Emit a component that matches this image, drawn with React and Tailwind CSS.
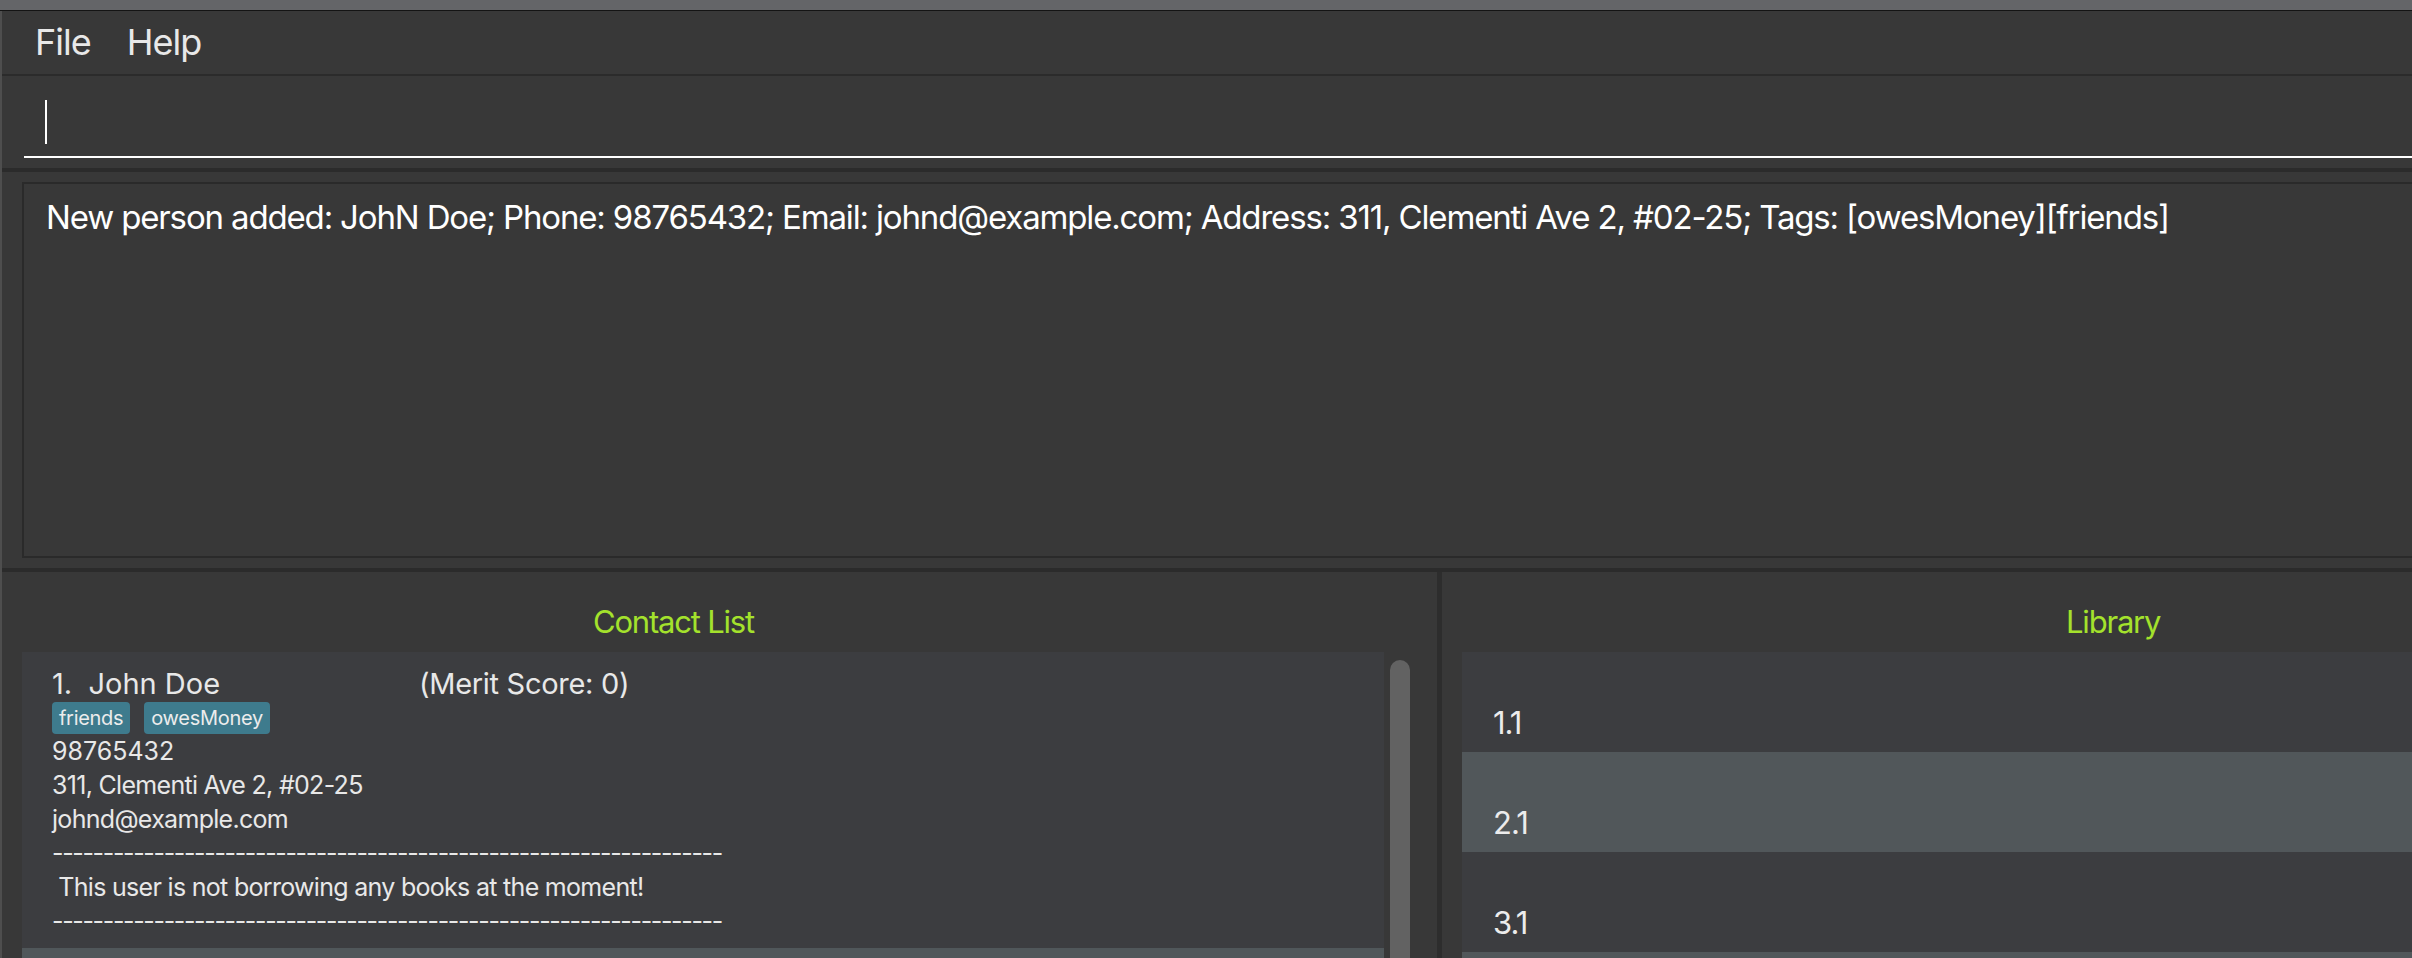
const dashes = '-'.repeat(66)

function Tag({ children }) {
  return (
    <span className="flex h-[32px] items-center rounded-[4px] bg-[#3e7b8d] px-[7px] text-[20px] leading-none tracking-[-0.3px] text-[#ececec]">
      {children}
    </span>
  )
}

function PersonCard() {
  return (
    <div className="bg-[#3c3d40] pl-[30px] pt-[14px] pb-[10px] text-[#e8e8e8]">
      <div className="flex h-[36px] text-[29px] leading-[36px]">
        <span className="w-[367px]">1.&nbsp;&nbsp;John Doe</span>
        <span className="tracking-[-0.3px]">(Merit Score: 0)</span>
      </div>
      <div className="flex gap-[14px]">
        <Tag>friends</Tag>
        <Tag>owesMoney</Tag>
      </div>
      <div className="text-[25px] leading-[34px] tracking-[-0.7px]">
        <p className="tracking-normal">98765432</p>
        <p>311, Clementi Ave 2, #02-25</p>
        <p>johnd@example.com</p>
        <p className="tracking-[-1.35px]">{dashes}</p>
        <p>&nbsp;This user is not borrowing any books at the moment!</p>
        <p className="tracking-[-1.35px]">{dashes}</p>
      </div>
    </div>
  )
}

function BookRow({ label, alt }) {
  return (
    <div className={`h-[100px] pl-[31px] pt-[51px] text-[31px] leading-[40px] tracking-[-1px] text-[#ececec] ${alt ? 'bg-[#51575a]' : 'bg-[#3c3d40]'}`}>
      {label}
    </div>
  )
}

export default function App() {
  return (
    <div className="flex h-[958px] w-[2412px] flex-col overflow-hidden bg-[#383838] font-['Inter',sans-serif]">
      {/* window title strip */}
      <div className="h-[10px] shrink-0 bg-[#646568]" />
      <div className="h-px shrink-0 bg-[#141414]" />

      <div className="flex min-h-0 flex-1">
        <div className="w-[2px] shrink-0 bg-[#4e4e4e]" />

        <div className="flex min-w-0 flex-1 flex-col">
          {/* menu bar */}
          <div className="flex h-[63px] shrink-0 text-[36px] leading-[63px] tracking-[-1px] text-[#e8e8e8]">
            <span className="ml-[33px]">File</span>
            <span className="ml-[36px]">Help</span>
          </div>
          <div className="h-[2px] shrink-0 bg-[#2b2b2b]" />

          {/* command box */}
          <div className="h-[92px] shrink-0 pl-[22px] pt-[24px]">
            <div className="h-[58px] border-b-2 border-white pl-[21px]">
              <div className="h-[44px] w-[2px] bg-white" />
            </div>
          </div>
          <div className="h-[4px] shrink-0 bg-[#2b2b2b]" />

          {/* result display */}
          <div className="h-[396px] shrink-0 py-[10px] pl-[20px]">
            <div className="h-full border-2 border-r-0 border-[#2a2a2a] pl-[22px] pt-[13px] text-[33px] leading-[40px] tracking-[-1.15px] whitespace-nowrap text-white">
              New person added: JohN Doe; Phone: 98765432; Email: johnd@example.com; Address: 311, Clementi Ave 2, #02-25; Tags: [owesMoney][friends]
            </div>
          </div>
          <div className="h-[4px] shrink-0 bg-[#2b2b2b]" />

          {/* lower panels */}
          <div className="flex min-h-0 flex-1">
            <div className="flex w-[1435px] shrink-0 flex-col">
              <div className="h-[80px] shrink-0 pl-[591px] pt-[31px] text-[31px] leading-[38px] tracking-[-1.2px] text-[#a4e22c]">
                Contact List
              </div>
              <div className="flex min-h-0 flex-1 pl-[20px] pr-[23px]">
                <div className="min-w-0 flex-1">
                  <PersonCard />
                  <div className="h-[40px] bg-[#50575a]" />
                </div>
                <div className="w-[30px] shrink-0 pl-[6px] pt-[8px]">
                  <div className="h-full w-[20px] rounded-t-[10px] bg-[#626262]" />
                </div>
              </div>
            </div>

            <div className="w-[5px] shrink-0 bg-[#2d2d2d]" />

            <div className="flex min-w-0 flex-1 flex-col">
              <div className="h-[80px] shrink-0 pl-[624px] pt-[31px] text-[31px] leading-[38px] tracking-[-1.2px] text-[#a4e22c]">
                Library
              </div>
              <div className="pl-[20px]">
                <BookRow label="1.1" />
                <BookRow label="2.1" alt />
                <BookRow label="3.1" />
                <BookRow label="" alt />
              </div>
            </div>
          </div>
        </div>
      </div>
    </div>
  )
}
